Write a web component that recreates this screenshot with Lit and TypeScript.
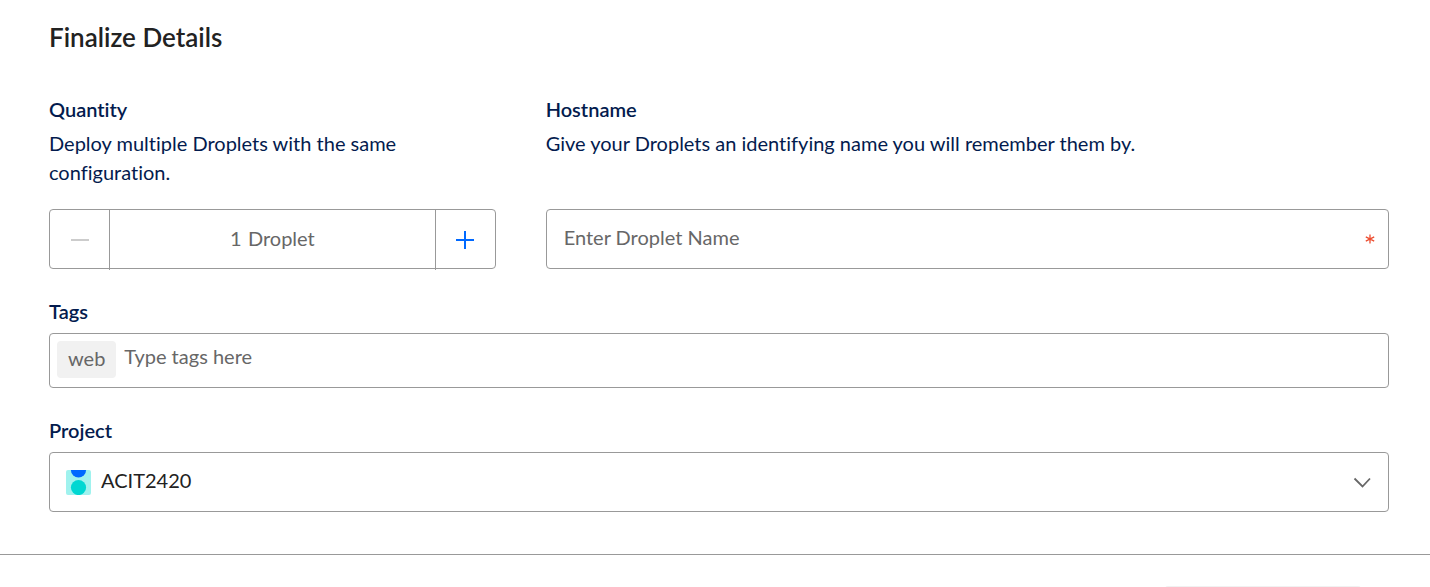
import { LitElement, html, css } from "lit";
import { customElement, state } from "lit/decorators.js";

@customElement("app-root")
export class AppRoot extends LitElement {
  @state() private quantity = 1;
  @state() private tags: string[] = ["web"];

  static styles = css`
    :host {
      display: block;
      height: 100vh;
      overflow: hidden;
      box-sizing: border-box;
      background: #fff;
      font-family: Lato, "Open Sans", sans-serif;
      font-size: 20px;
      line-height: 29px;
      font-variant-ligatures: none;
      color: #031b4e;
    }
    *, *::before, *::after { box-sizing: border-box; }
    input, select, button {
      font: inherit;
      font-variant-ligatures: none;
      color: inherit;
      margin: 0;
      padding: 0;
      border: 0;
      background: none;
      outline: none;
      min-width: 0;
    }
    input::placeholder { color: #676767; opacity: 1; }
    .form { padding: 20px 41px 42px 49px; }
    .title {
      margin: 0;
      font-size: 26px;
      line-height: 34px;
      font-weight: 600;
      color: #222;
    }
    .columns {
      display: grid;
      grid-template-columns: calc(100% / 3) 1fr;
      column-gap: 50px;
      margin-top: 41px;
    }
    .column { display: flex; flex-direction: column; }
    .label { display: block; font-weight: 600; }
    .hint { margin: 5px 0 22px; }
    .box {
      display: flex;
      align-items: center;
      height: 60px;
      margin-top: auto;
      border: 1px solid #999;
      border-radius: 4px;
    }
    .step {
      display: flex;
      align-items: center;
      justify-content: center;
      width: 60px;
      height: 60px;
      flex: none;
      align-self: flex-start;
      color: #0069ff;
    }
    .minus { border-right: 1px solid #999; color: #ccc; }
    .plus { border-left: 1px solid #999; }
    .amount {
      display: flex;
      flex: 1;
      justify-content: center;
      gap: 6px;
      padding-bottom: 2px;
      color: #676767;
    }
    .count { width: 12px; text-align: center; }
    .name { padding: 0 12px 0 17px; }
    .grow { flex: 1; padding-bottom: 3px; }
    .required { color: #ed4f32; }
    .group { margin-top: 28px; }
    .group .box { margin-top: 7px; }
    .tags { height: 55px; padding: 0 7px 2px; gap: 8px; }
    .tags .grow { padding-bottom: 6px; }
    .tag {
      padding: 3px 11px 5px;
      border-radius: 4px;
      background: #f1f1f1;
      color: #676767;
    }
    .project { padding-left: 16px; color: #222; position: relative; }
    .badge { flex: none; margin-right: 10px; }
    .select { appearance: none; height: 58px; padding-right: 44px; cursor: pointer; }
    .chevron { position: absolute; right: 17px; pointer-events: none; }
    .footer {
      display: flex;
      justify-content: flex-end;
      padding: 31px 69px 31px 49px;
      border-top: 1px solid #999;
    }
    .create {
      width: 196px;
      height: 58px;
      border-radius: 3px;
      background: #f1f1f1;
      color: #999;
    }
  `;

  private step(delta: number) {
    this.quantity = Math.max(1, this.quantity + delta);
  }

  private addTag(event: KeyboardEvent) {
    const field = event.target as HTMLInputElement;
    if (event.key !== "Enter" || !field.value.trim()) return;
    event.preventDefault();
    this.tags = [...this.tags, field.value.trim()];
    field.value = "";
  }

  render() {
    return html`
      <main class="form">
        <h2 class="title">Finalize Details</h2>
        <div class="columns">
          <section class="column">
            <label class="label" for="quantity">Quantity</label>
            <p class="hint">Deploy multiple Droplets with the same configuration.</p>
            <div class="box">
              <button class="step minus" aria-label="Decrease" ?disabled=${this.quantity < 2} @click=${() => this.step(-1)}>
                <svg width="20" height="20" viewBox="0 0 20 20"><path d="M1 10H19" stroke="currentColor" stroke-width="2" /></svg>
              </button>
              <div class="amount">
                <input class="count" id="quantity" inputmode="numeric" .value=${String(this.quantity)} />
                <span>Droplet</span>
              </div>
              <button class="step plus" aria-label="Increase" @click=${() => this.step(1)}>
                <svg width="20" height="20" viewBox="0 0 20 20"><path d="M1 10H19M10 1V19" stroke="currentColor" stroke-width="2" /></svg>
              </button>
            </div>
          </section>
          <section class="column">
            <label class="label" for="hostname">Hostname</label>
            <p class="hint">Give your Droplets an identifying name you will remember them by.</p>
            <div class="box name">
              <input class="grow" id="hostname" placeholder="Enter Droplet Name" required />
              <svg class="required" width="12" height="12" viewBox="0 0 12 12" aria-hidden="true">
                <path d="M6 1.5V10.5M1.8 3.8L10.2 8.2M10.2 3.8L1.8 8.2" fill="none" stroke="currentColor" stroke-width="1.3" />
              </svg>
            </div>
          </section>
        </div>
        <section class="group">
          <label class="label" for="tags">Tags</label>
          <div class="box tags">
            ${this.tags.map((tag) => html`<span class="tag">${tag}</span>`)}
            <input class="grow" id="tags" placeholder="Type tags here" @keydown=${this.addTag} />
          </div>
        </section>
        <section class="group">
          <label class="label" for="project">Project</label>
          <div class="box project">
            <svg class="badge" width="25" height="25" viewBox="0 0 25 25" aria-hidden="true">
              <defs><clipPath id="tile"><rect width="25" height="25" rx="2" /></clipPath></defs>
              <g clip-path="url(#tile)">
                <rect width="25" height="25" fill="#a0f2ee" />
                <circle cx="12.5" cy="0" r="7.6" fill="#0069ff" />
                <circle cx="12.5" cy="17.5" r="7.6" fill="#00d7d2" />
              </g>
            </svg>
            <select class="select grow" id="project"><option>ACIT2420</option></select>
            <svg class="chevron" width="18" height="12" viewBox="0 0 18 12" aria-hidden="true">
              <path d="M1.5 2.5L9.5 10.5L17 2.5" fill="none" stroke="#676767" stroke-width="1.8" />
            </svg>
          </div>
        </section>
      </main>
      <footer class="footer"><button class="create" disabled aria-label="Create Droplet"></button></footer>
    `;
  }
}
